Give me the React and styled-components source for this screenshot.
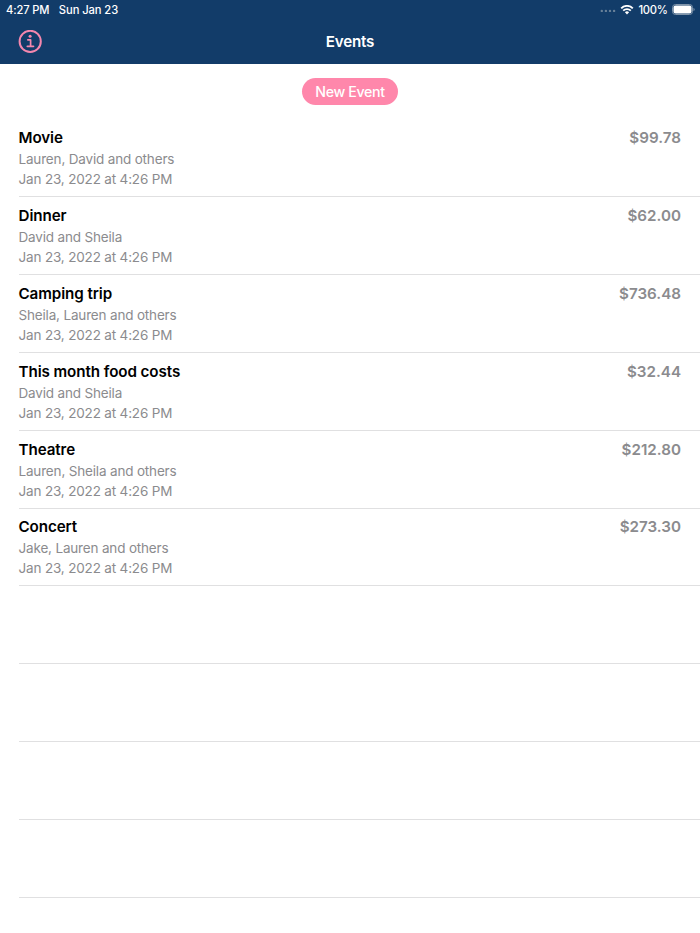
import styled, { createGlobalStyle } from 'styled-components';

const GlobalStyle = createGlobalStyle`
  * {
    box-sizing: border-box;
  }

  body {
    margin: 0;
    background: #fff;
    font-family: Inter, 'Liberation Sans', sans-serif;
    -webkit-font-smoothing: antialiased;
  }
`;

const Screen = styled.div`
  width: 100%;
  height: 933px;
  overflow: hidden;
  background: #fff;
`;

const Header = styled.header`
  height: 64px;
  color: #fff;
  background: #123c69;
`;

const StatusBar = styled.div`
  display: flex;
  justify-content: space-between;
  height: 19px;
  padding: 0 5px 0 6px;
  font-size: 11.2px;
  font-weight: 500;
  line-height: 19px;
`;

const StatusGroup = styled.div`
  display: flex;
  align-items: center;
  gap: ${(props) => props.$gap}px;
`;

const StatusText = styled.span`
  padding-top: 1px;
  letter-spacing: ${(props) => props.$spacing || 0}px;
`;

const NavBar = styled.div`
  display: grid;
  grid-template-columns: 1fr auto 1fr;
  align-items: center;
  height: 45px;
  padding: 0 18px;
`;

const InfoButton = styled.button`
  display: flex;
  width: 24px;
  height: 24px;
  padding: 0;
  border: none;
  background: none;
  cursor: pointer;
`;

const Title = styled.h1`
  margin: 0;
  font-size: 15.2px;
  font-weight: 600;
  line-height: 20px;
  letter-spacing: -0.2px;
`;

const Actions = styled.div`
  display: flex;
  justify-content: center;
  height: 55.4px;
  padding-top: 14px;
`;

const NewEventButton = styled.button`
  width: 96px;
  height: 27px;
  padding: 0;
  border: none;
  border-radius: 14px;
  color: #fff;
  background: #ff87ab;
  font-family: inherit;
  font-size: 14.2px;
  font-weight: 500;
  line-height: 27px;
  letter-spacing: -0.35px;
  cursor: pointer;
`;

const EventList = styled.ul`
  margin: 0;
  padding: 0 0 0 18.5px;
  list-style: none;
`;

const EventRow = styled.li`
  display: flex;
  justify-content: space-between;
  height: 77.83px;
  padding: 8.8px 19px 0 0;
  border-bottom: 1px solid #e0e0e1;
`;

const EventName = styled.h2`
  margin: 0 0 1px;
  color: #000;
  font-size: 15.2px;
  font-weight: 600;
  line-height: 20px;
  letter-spacing: -0.09px;
`;

const EventDetail = styled.p`
  margin: 0;
  color: #8b8b8e;
  font-size: 13.5px;
  line-height: 20px;
  letter-spacing: -0.17px;
`;

const Amount = styled.span`
  color: #8b8b8e;
  font-size: 15.2px;
  font-weight: 600;
  line-height: 20px;
`;

const events = [
  { name: 'Movie', people: 'Lauren, David and others', amount: '$99.78' },
  { name: 'Dinner', people: 'David and Sheila', amount: '$62.00' },
  { name: 'Camping trip', people: 'Sheila, Lauren and others', amount: '$736.48' },
  { name: 'This month food costs', people: 'David and Sheila', amount: '$32.44' },
  { name: 'Theatre', people: 'Lauren, Sheila and others', amount: '$212.80' },
  { name: 'Concert', people: 'Jake, Lauren and others', amount: '$273.30' },
];

const emptyRows = [0, 1, 2, 3];

const InfoIcon = () => (
  <svg width="24" height="24" viewBox="0 0 24 24" fill="none" stroke="#f487ae">
    <circle cx="12.2" cy="11.4" r="10.6" strokeWidth="2" />
    <circle cx="12.1" cy="6.3" r="1.5" fill="#f487ae" stroke="none" />
    <path d="M9.8 9.8h2.8v6.3M9.3 16.3h6.2" strokeWidth="1.7" strokeLinecap="round" strokeLinejoin="round" />
  </svg>
);

const SignalDots = () => (
  <svg width="16" height="4" viewBox="0 0 16 4" fill="#688199">
    <circle cx="1.8" cy="3" r="1.2" />
    <circle cx="5.9" cy="3" r="1.2" />
    <circle cx="10" cy="3" r="1.2" />
    <circle cx="14.1" cy="3" r="1.2" />
  </svg>
);

const WifiIcon = () => (
  <svg width="14" height="10" viewBox="0 0 13 10" fill="none" stroke="#fff">
    <path d="M.7 3.3a8.2 8.2 0 0 1 11.6 0" strokeWidth="1.9" />
    <path d="M2.7 5.6a5.4 5.4 0 0 1 7.6 0" strokeWidth="1.8" />
    <path d="M4.4 7.3a3 3 0 0 1 4.2 0l-2.1 2.1z" fill="#fff" stroke="none" />
  </svg>
);

const BatteryIcon = () => (
  <svg width="23" height="11" viewBox="0 0 23 11">
    <rect x=".5" y=".5" width="20" height="10" rx="3" fill="none" stroke="#7f94aa" />
    <rect x="1.5" y="1.5" width="18" height="8" rx="2" fill="#fff" />
    <path d="M21.5 3.7a2 2 0 0 1 0 3.6z" fill="#7f94aa" />
  </svg>
);

const App = () => {
  return (
    <>
      <GlobalStyle />
      <Screen>
        <Header>
          <StatusBar>
            <StatusGroup $gap={9.5}>
              <StatusText $spacing={-0.15}>4:27 PM</StatusText>
              <StatusText $spacing={-0.08}>Sun Jan 23</StatusText>
            </StatusGroup>
            <StatusGroup $gap={4.5}>
              <SignalDots />
              <WifiIcon />
              <StatusText $spacing={-0.3}>100%</StatusText>
              <BatteryIcon />
            </StatusGroup>
          </StatusBar>
          <NavBar>
            <InfoButton aria-label="Info">
              <InfoIcon />
            </InfoButton>
            <Title>Events</Title>
          </NavBar>
        </Header>
        <Actions>
          <NewEventButton>New Event</NewEventButton>
        </Actions>
        <EventList>
          {events.map((event) => (
            <EventRow key={event.name}>
              <div>
                <EventName>{event.name}</EventName>
                <EventDetail>{event.people}</EventDetail>
                <EventDetail>Jan 23, 2022 at 4:26 PM</EventDetail>
              </div>
              <Amount>{event.amount}</Amount>
            </EventRow>
          ))}
          {emptyRows.map((row) => (
            <EventRow key={row} />
          ))}
        </EventList>
      </Screen>
    </>
  );
};

export default App;
